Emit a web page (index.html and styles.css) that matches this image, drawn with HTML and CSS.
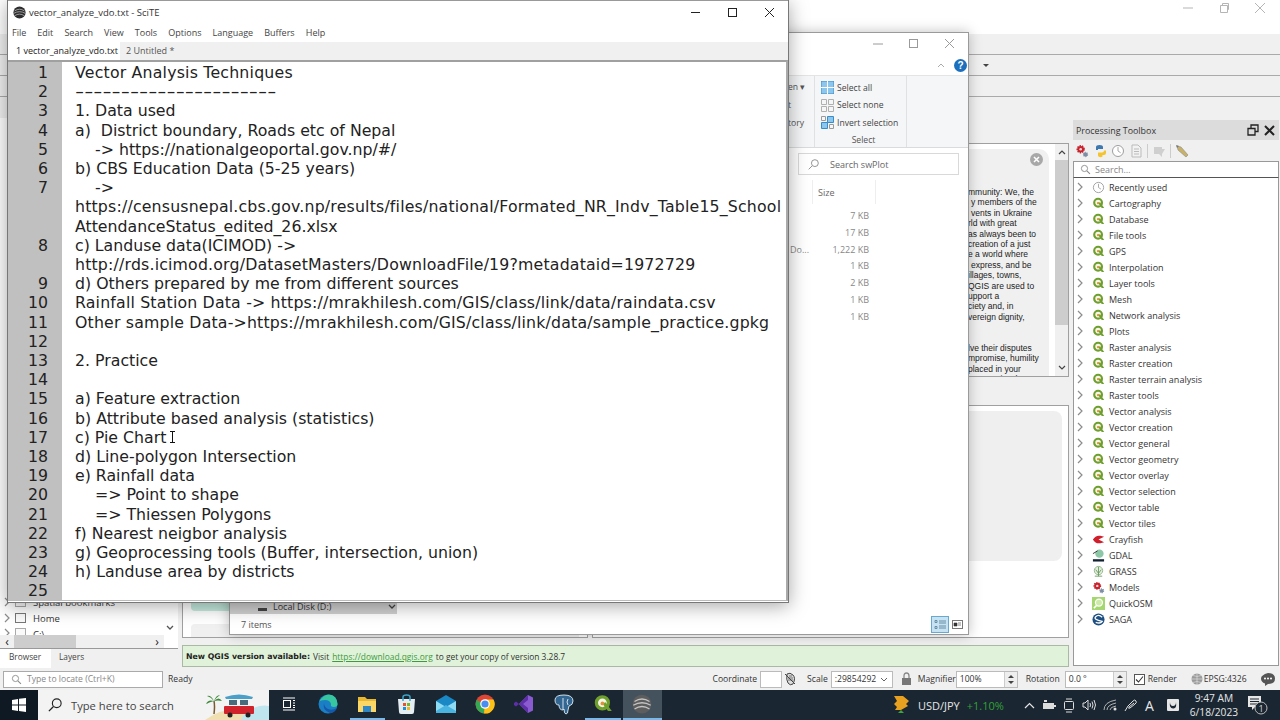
FILE: index.html
```html
<!DOCTYPE html>
<html lang="en">
<head>
    <meta charset="UTF-8">
    <title>vector_analyze_vdo.txt - SciTE</title>
    <link rel="stylesheet" href="styles.css">
</head>
<body>
    <!-- shared icons -->
    <svg class="defs" width="0" height="0">
        <symbol id="i-q" viewBox="0 0 16 16">
            <circle cx="7.5" cy="7" r="4.8" fill="#f4f7e8" stroke="#6f9f2c" stroke-width="2.6"/>
            <path d="M7.5 7.5 L12 13.5 L15 13.5 L10 6.5z" fill="#6f9f2c"/>
            <circle cx="7.5" cy="7.5" r="1.5" fill="#e0913a"/>
        </symbol>
        <symbol id="i-clock" viewBox="0 0 16 16">
            <circle cx="8" cy="8" r="6.3" fill="#fff" stroke="#9a9a9a" stroke-width="1.1"/>
            <path d="M8 3.5V8l3 2" fill="none" stroke="#9a9a9a" stroke-width="1"/>
        </symbol>
        <symbol id="i-search" viewBox="0 0 16 16">
            <circle cx="6.5" cy="6.5" r="4.5" fill="none" stroke="#8a8a8a" stroke-width="1.3"/>
            <path d="M10 10l4.500 4.500" stroke="#8a8a8a" stroke-width="1.500"/>
        </symbol>
        <symbol id="i-chev" viewBox="0 0 8 10">
            <path d="M2 1l4 4-4 4" fill="none" stroke="#8c8c8c" stroke-width="1.2"/>
        </symbol>
        <symbol id="i-gears" viewBox="0 0 16 16">
            <circle cx="6.500" cy="6" r="3.800" fill="#c8232c" stroke="#c8232c" stroke-width="2" stroke-dasharray="1.500 1.200"/>
            <circle cx="6.500" cy="6" r="1.500" fill="#f5d5d5"/>
            <circle cx="12" cy="12" r="2.300" fill="#7d8fa5" stroke="#7d8fa5" stroke-width="1.500" stroke-dasharray="1.200 1"/>
        </symbol>
        <symbol id="i-scite" viewBox="0 0 16 16">
            <circle cx="8" cy="8" r="7.500" fill="#2c2c2c"/>
            <path d="M2 6q6-4 12 0M1 9q7-4 14 0M2 12q6-4 12 0" fill="none" stroke="#b5b5b5" stroke-width="1"/>
        </symbol>
    </svg>

    <div class="desktop">

        <!-- QGIS main window, at the back -->
        <div class="qgis">
            <div class="q-title">
                <svg class="wc" width="12" height="12" viewBox="0 0 12 12"><path d="M1 6h10" stroke="#b5b5b5"/></svg>
                <svg class="wc" width="12" height="12" viewBox="0 0 12 12"><path d="M2.500 3.500h7v7h-7zM4.500 3.500v-2h6v6h-1" fill="none" stroke="#b5b5b5"/></svg>
                <svg class="wc" width="12" height="12" viewBox="0 0 12 12"><path d="M1 1l10 10M11 1L1 11" stroke="#b5b5b5"/></svg>
            </div>
            <div class="q-toolbar"></div>
            <div class="q-toolbar q-toolbar-menu"><span class="tool-drop"></span></div>
            <div class="q-toolbar"></div>
            <div class="q-toolbar q-toolbar-last"></div>

            <div class="q-body">
                <div class="q-left">
                    <div class="browser">
                        <div class="tree-row"><svg class="chev"><use href="#i-chev"/></svg><span class="tree-icon"></span>Spatial bookmarks</div>
                        <div class="tree-row"><svg class="chev"><use href="#i-chev"/></svg><span class="tree-icon tree-home"></span>Home</div>
                        <div class="tree-row tree-cut"><svg class="chev"><use href="#i-chev"/></svg><span class="tree-icon"></span>C:\</div>
                        <svg class="tree-down" width="8" height="6" viewBox="0 0 8 6"><path d="M1 1l3 3 3-3" fill="none" stroke="#555" stroke-width="1.300"/></svg>
                        <div class="h-scroll">
                            <span class="arrow">‹</span>
                            <span class="h-thumb"></span>
                            <span class="arrow">›</span>
                            <span class="h-end"></span>
                        </div>
                    </div>
                    <div class="dock-tabs">
                        <span class="dock-tab active">Browser</span>
                        <span class="dock-tab">Layers</span>
                    </div>
                </div>

                <div class="q-centre">
                    <div class="panes">
                        <div class="pane-left">
                            <div class="card-teal"></div>
                            <div class="card-grey"></div>
                        </div>
                        <div class="pane-right">
                            <div class="news">
                                <div class="news-card">
                                    <svg class="news-close" width="13" height="13" viewBox="0 0 13 13"><circle cx="6.500" cy="6.500" r="6.500" fill="#a8a8a8"/><path d="M4 4l5 5M9 4l-5 5" stroke="#fff" stroke-width="1.500"/></svg>
                                    <div class="news-line">mmunity: We, the</div>
                                    <div class="news-line in">y members of the</div>
                                    <div class="news-line in">vents in Ukraine</div>
                                    <div class="news-line">rld with great</div>
                                    <div class="news-line">as always been to</div>
                                    <div class="news-line">creation of a just</div>
                                    <div class="news-line">e a world where</div>
                                    <div class="news-line in">express, and be</div>
                                    <div class="news-line">illages, towns,</div>
                                    <div class="news-line">QGIS are used to</div>
                                    <div class="news-line">upport a</div>
                                    <div class="news-line">ciety and, in</div>
                                    <div class="news-line">vereign dignity,</div>
                                    <div class="news-line">&nbsp;</div>
                                    <div class="news-line">&nbsp;</div>
                                    <div class="news-line">lve their disputes</div>
                                    <div class="news-line">mpromise, humility</div>
                                    <div class="news-line">placed in your</div>
                                    <div class="news-line">community, the</div>
                                </div>
                                <div class="v-scroll">
                                    <svg width="8" height="6" viewBox="0 0 8 6"><path d="M1 5l3-3 3 3" fill="none" stroke="#444" stroke-width="1.200"/></svg>
                                    <span class="v-thumb"></span>
                                    <svg width="8" height="6" viewBox="0 0 8 6"><path d="M1 1l3 3 3-3" fill="none" stroke="#444" stroke-width="1.200"/></svg>
                                </div>
                            </div>
                            <div class="lower-box"><div class="lower-card"></div></div>
                        </div>
                    </div>
                    <div class="msgbar">
                        <b>New QGIS version available:</b> <span>Visit</span> <a href="#">https://download.qgis.org</a> <span>to get your copy of version 3.28.7</span>
                    </div>
                </div>

                <div class="toolbox">
                    <div class="tb-head">
                        <span>Processing Toolbox</span>
                        <svg class="tb-float" width="12" height="12" viewBox="0 0 12 12"><path d="M1 4.500h7v6.500H1zM4 4.500V1h7v6.500H8" fill="none" stroke="#222" stroke-width="1.300"/></svg>
                        <svg width="11" height="11" viewBox="0 0 11 11"><path d="M1 1l9 9M10 1l-9 9" stroke="#222" stroke-width="2"/></svg>
                    </div>
                    <div class="tb-tools">
                        <svg width="14" height="14"><use href="#i-gears"/></svg>
                        <svg width="14" height="14" viewBox="0 0 14 14"><path d="M3 6V3q0-2 3.500-2T10 3v2H5v1h6" fill="#3d78b0"/><path d="M11 6.500h2V9q0 2-2 2H9.500v1.500q-1 1-3 .5T5 11V8.500h4q2 0 2-2z" fill="#f4c430"/></svg>
                        <svg width="14" height="14"><use href="#i-clock"/></svg>
                        <svg width="14" height="14" viewBox="0 0 14 14"><path d="M3 1h6l3 3v9H3z" fill="#f2f2f2" stroke="#bbb"/><path d="M5 5h5M5 7.500h5M5 10h5" stroke="#bbb"/></svg>
                        <span class="tb-sep"></span>
                        <svg width="14" height="14" viewBox="0 0 14 14"><path d="M2 3h8v2h3l-3 5v3l-3-3H2z" fill="#cfcfcf"/></svg>
                        <span class="tb-sep"></span>
                        <svg width="14" height="14" viewBox="0 0 14 14"><path d="M2 2l4 1 7 8-2 2-8-7z" fill="#c8b26a" stroke="#8a8a8a" stroke-width=".6"/><path d="M1 1l3 1-2 2z" fill="#777"/></svg>
                    </div>
                    <div class="tb-search">
                        <svg width="11" height="11"><use href="#i-search"/></svg>
                        <span>Search…</span>
                    </div>
                    <div class="tb-list">
                        <div class="tb-row"><svg class="chev"><use href="#i-chev"/></svg><svg class="tb-ico"><use href="#i-clock"/></svg>Recently used</div>
                        <div class="tb-row"><svg class="chev"><use href="#i-chev"/></svg><svg class="tb-ico"><use href="#i-q"/></svg>Cartography</div>
                        <div class="tb-row"><svg class="chev"><use href="#i-chev"/></svg><svg class="tb-ico"><use href="#i-q"/></svg>Database</div>
                        <div class="tb-row"><svg class="chev"><use href="#i-chev"/></svg><svg class="tb-ico"><use href="#i-q"/></svg>File tools</div>
                        <div class="tb-row"><svg class="chev"><use href="#i-chev"/></svg><svg class="tb-ico"><use href="#i-q"/></svg>GPS</div>
                        <div class="tb-row"><svg class="chev"><use href="#i-chev"/></svg><svg class="tb-ico"><use href="#i-q"/></svg>Interpolation</div>
                        <div class="tb-row"><svg class="chev"><use href="#i-chev"/></svg><svg class="tb-ico"><use href="#i-q"/></svg>Layer tools</div>
                        <div class="tb-row"><svg class="chev"><use href="#i-chev"/></svg><svg class="tb-ico"><use href="#i-q"/></svg>Mesh</div>
                        <div class="tb-row"><svg class="chev"><use href="#i-chev"/></svg><svg class="tb-ico"><use href="#i-q"/></svg>Network analysis</div>
                        <div class="tb-row"><svg class="chev"><use href="#i-chev"/></svg><svg class="tb-ico"><use href="#i-q"/></svg>Plots</div>
                        <div class="tb-row"><svg class="chev"><use href="#i-chev"/></svg><svg class="tb-ico"><use href="#i-q"/></svg>Raster analysis</div>
                        <div class="tb-row"><svg class="chev"><use href="#i-chev"/></svg><svg class="tb-ico"><use href="#i-q"/></svg>Raster creation</div>
                        <div class="tb-row"><svg class="chev"><use href="#i-chev"/></svg><svg class="tb-ico"><use href="#i-q"/></svg>Raster terrain analysis</div>
                        <div class="tb-row"><svg class="chev"><use href="#i-chev"/></svg><svg class="tb-ico"><use href="#i-q"/></svg>Raster tools</div>
                        <div class="tb-row"><svg class="chev"><use href="#i-chev"/></svg><svg class="tb-ico"><use href="#i-q"/></svg>Vector analysis</div>
                        <div class="tb-row"><svg class="chev"><use href="#i-chev"/></svg><svg class="tb-ico"><use href="#i-q"/></svg>Vector creation</div>
                        <div class="tb-row"><svg class="chev"><use href="#i-chev"/></svg><svg class="tb-ico"><use href="#i-q"/></svg>Vector general</div>
                        <div class="tb-row"><svg class="chev"><use href="#i-chev"/></svg><svg class="tb-ico"><use href="#i-q"/></svg>Vector geometry</div>
                        <div class="tb-row"><svg class="chev"><use href="#i-chev"/></svg><svg class="tb-ico"><use href="#i-q"/></svg>Vector overlay</div>
                        <div class="tb-row"><svg class="chev"><use href="#i-chev"/></svg><svg class="tb-ico"><use href="#i-q"/></svg>Vector selection</div>
                        <div class="tb-row"><svg class="chev"><use href="#i-chev"/></svg><svg class="tb-ico"><use href="#i-q"/></svg>Vector table</div>
                        <div class="tb-row"><svg class="chev"><use href="#i-chev"/></svg><svg class="tb-ico"><use href="#i-q"/></svg>Vector tiles</div>
                        <div class="tb-row"><svg class="chev"><use href="#i-chev"/></svg><svg class="tb-ico" viewBox="0 0 14 14"><path d="M1 7q3-5 8-4l4 1-6 3 6 3-4 1q-5 1-8-4z" fill="#cf1f2b"/></svg>Crayfish</div>
                        <div class="tb-row"><svg class="chev"><use href="#i-chev"/></svg><svg class="tb-ico" viewBox="0 0 14 14"><circle cx="8" cy="5" r="4.500" fill="#8ec6a8"/><path d="M1 5l5-3" stroke="#333"/><path d="M1 11h12v2.500H1z" fill="#123"/></svg>GDAL</div>
                        <div class="tb-row"><svg class="chev"><use href="#i-chev"/></svg><svg class="tb-ico" viewBox="0 0 14 14"><circle cx="7" cy="6" r="4.500" fill="#e4f0dc" stroke="#8fb48a"/><path d="M7 2v10M4 5l3 4 3-4M3 12h8" fill="none" stroke="#6d9a68"/></svg>GRASS</div>
                        <div class="tb-row"><svg class="chev"><use href="#i-chev"/></svg><svg class="tb-ico"><use href="#i-gears"/></svg>Models</div>
                        <div class="tb-row"><svg class="chev"><use href="#i-chev"/></svg><svg class="tb-ico" viewBox="0 0 14 14"><rect width="14" height="14" fill="#a5d66f"/><circle cx="7.500" cy="6" r="3.800" fill="#cdeaa8" stroke="#fff" stroke-width="1.300"/><path d="M5 9l-3 3" stroke="#fff" stroke-width="1.600"/></svg>QuickOSM</div>
                        <div class="tb-row"><svg class="chev"><use href="#i-chev"/></svg><svg class="tb-ico" viewBox="0 0 14 14"><circle cx="7" cy="7" r="6.500" fill="#1e4f82"/><path d="M11 4.500Q7 1 4 4t7 5Q9 12 4 10" fill="none" stroke="#fff" stroke-width="1.400"/></svg>SAGA</div>
                    </div>
                </div>
            </div>

            <div class="statusbar">
                <div class="locator">
                    <svg width="11" height="11"><use href="#i-search"/></svg>
                    <span>Type to locate (Ctrl+K)</span>
                </div>
                <span class="st-ready">Ready</span>
                <span class="st-label st-coord">Coordinate</span>
                <span class="field f-coord"></span>
                <svg class="st-mouse" width="12" height="14" viewBox="0 0 12 14"><path d="M3 2q3-2 6 1t0 9q-3 2-5-1T3 2zM1 2l10 10" fill="#ddd" stroke="#444"/><path d="M5 4h3M4 6h5M4 8h5" stroke="#444" stroke-width=".7"/></svg>
                <span class="st-label st-scale">Scale</span>
                <span class="field f-scale">:29854292<svg width="8" height="5" viewBox="0 0 8 5"><path d="M1 1l3 3 3-3" fill="none" stroke="#666"/></svg></span>
                <svg class="st-lock" width="11" height="14" viewBox="0 0 11 14"><path d="M3 6V4q0-3 2.500-3T8 4v2" fill="none" stroke="#888" stroke-width="1.300"/><rect x="1" y="6" width="9" height="7" fill="#777"/></svg>
                <span class="st-label st-mag">Magnifier</span>
                <span class="field f-spin">100%<span class="spin"></span></span>
                <span class="st-label st-rot">Rotation</span>
                <span class="field f-spin f-rot">0.0 °<span class="spin"></span></span>
                <span class="check"><svg width="9" height="9" viewBox="0 0 9 9"><path d="M1 4.500l2.500 2.500L8 1.500" fill="none" stroke="#333" stroke-width="1.100"/></svg></span>
                <span class="st-label st-render">Render</span>
                <svg class="st-globe" width="12" height="12" viewBox="0 0 12 12"><circle cx="6" cy="6" r="5.500" fill="#9a9a9a"/><path d="M0 6h12M6 0v12M2 2.500q4 2 8 0M2 9.500q4-2 8 0" stroke="#ddd" stroke-width=".7" fill="none"/></svg>
                <span class="st-label st-epsg">EPSG:4326</span>
                <svg class="st-bubble" width="14" height="13" viewBox="0 0 14 13"><path d="M7 0q7 0 7 5.500T7 11L4 13v-2.500Q0 9 0 5.500T7 0z" fill="#555"/><circle cx="4" cy="5.500" r="1" fill="#fff"/><circle cx="7" cy="5.500" r="1" fill="#fff"/><circle cx="10" cy="5.500" r="1" fill="#fff"/></svg>
            </div>
        </div>

        <!-- File Explorer, mostly covered -->
        <div class="explorer">
            <div class="ex-title">
                <svg class="wc" width="12" height="12" viewBox="0 0 12 12"><path d="M1 6h10" stroke="#9a9a9a"/></svg>
                <svg class="wc" width="12" height="12" viewBox="0 0 12 12"><rect x="1.500" y="1.500" width="8" height="8" fill="none" stroke="#9a9a9a"/></svg>
                <svg class="wc" width="12" height="12" viewBox="0 0 12 12"><path d="M1 1l9 9M10 1l-9 9" stroke="#9a9a9a"/></svg>
            </div>
            <div class="ex-help">
                <svg width="8" height="5" viewBox="0 0 8 5"><path d="M1 4l3-3 3 3" fill="none" stroke="#aaa"/></svg>
                <span class="help-dot">?</span>
            </div>
            <div class="ribbon">
                <div class="rb-open">
                    <span>en ▾</span>
                    <span>t</span>
                    <span>tory</span>
                </div>
                <div class="rb-select">
                    <div class="rb-item">
                        <svg width="13" height="13" viewBox="0 0 13 13"><rect width="13" height="13" fill="#8cc6ec" stroke="#3a8cc8"/><path d="M6.500 0v13M0 6.500h13" stroke="#fff"/></svg>
                        Select all
                    </div>
                    <div class="rb-item">
                        <svg width="13" height="13" viewBox="0 0 13 13"><path d="M.5.500h5v5h-5zM7.500.500h5v5h-5zM.5 7.500h5v5h-5zM7.500 7.500h5v5h-5z" fill="none" stroke="#b0b0b0"/></svg>
                        Select none
                    </div>
                    <div class="rb-item">
                        <svg width="13" height="13" viewBox="0 0 13 13"><path d="M6.500.500h6v6h-6zM.5 6.500h6v6h-6z" fill="#8cc6ec" stroke="#3a8cc8"/><path d="M.5.500h4v4h-4zM8.500 8.500h4v4h-4z" fill="none" stroke="#9a9a9a"/></svg>
                        Invert selection
                    </div>
                    <div class="rb-label">Select</div>
                </div>
            </div>
            <div class="ex-search-row">
                <div class="ex-search">
                    <svg width="11" height="11" viewBox="0 0 16 16"><circle cx="10" cy="6" r="5" fill="none" stroke="#888" stroke-width="1.300"/><path d="M6 10l-5 5" stroke="#888" stroke-width="1.300"/></svg>
                    <span>Search swPlot</span>
                </div>
            </div>
            <div class="ex-body">
                <div class="ex-nav">
                    <div class="nav-row">
                        <span class="disk"></span>
                        <span>Local Disk (D:)</span>
                        <svg width="8" height="6" viewBox="0 0 8 6"><path d="M1 1l3 3 3-3" fill="none" stroke="#444" stroke-width="1.300"/></svg>
                    </div>
                </div>
                <div class="ex-list">
                    <div class="size-head">Size</div>
                    <div class="size-row">7 KB</div>
                    <div class="size-row">17 KB</div>
                    <div class="size-row"><span class="clip-name">Do...</span>1,222 KB</div>
                    <div class="size-row">1 KB</div>
                    <div class="size-row">2 KB</div>
                    <div class="size-row">1 KB</div>
                    <div class="size-row">1 KB</div>
                </div>
            </div>
            <div class="ex-status">
                <span>7 items</span>
                <span class="view-btn active">
                    <svg width="13" height="13" viewBox="0 0 13 13"><path d="M1 2.500h2v2H1zM1 8.500h2v2H1zM5 3h7M5 5h7M5 8h7M5 10h7" fill="none" stroke="#6a8ea5"/></svg>
                </span>
                <span class="view-btn">
                    <svg width="11" height="9" viewBox="0 0 11 9"><rect x=".5" y=".5" width="10" height="8" fill="#fff" stroke="#777"/><path d="M2 3h3v3H2zM6 3h3M6 5h3" fill="#333" stroke="#333" stroke-width=".6"/></svg>
                </span>
            </div>
        </div>

        <!-- SciTE editor, in front -->
        <div class="scite">
            <div class="sc-title">
                <svg class="sc-icon"><use href="#i-scite"/></svg>
                <span class="sc-name">vector_analyze_vdo.txt - SciTE</span>
                <svg class="wc" width="11" height="11" viewBox="0 0 11 11"><path d="M1 5.500h9" stroke="#222"/></svg>
                <svg class="wc" width="11" height="11" viewBox="0 0 11 11"><rect x="1.500" y="1.500" width="8" height="8" fill="none" stroke="#222"/></svg>
                <svg class="wc" width="11" height="11" viewBox="0 0 11 11"><path d="M1 1l9 9M10 1l-9 9" stroke="#222"/></svg>
            </div>
            <div class="sc-menu">
                <span>File</span><span>Edit</span><span>Search</span><span>View</span><span>Tools</span><span>Options</span><span>Language</span><span>Buffers</span><span>Help</span>
            </div>
            <div class="sc-tabs">
                <span class="sc-tab active">1 vector_analyze_vdo.txt</span>
                <span class="sc-tab">2 Untitled *</span>
            </div>
            <div class="editor">
                <div class="line"><span class="num">1</span><span class="txt wide">Vector Analysis Techniques</span></div>
                <div class="line"><span class="num">2</span><span class="txt"><span class="dash">----------------------</span></span></div>
                <div class="line"><span class="num">3</span><span class="txt">1. Data used</span></div>
                <div class="line"><span class="num">4</span><span class="txt">a)  District boundary, Roads etc of Nepal</span></div>
                <div class="line"><span class="num">5</span><span class="txt">    -&gt; https://nationalgeoportal.gov.np/#/</span></div>
                <div class="line"><span class="num">6</span><span class="txt">b) CBS Education Data (5-25 years)</span></div>
                <div class="line"><span class="num">7</span><span class="txt">    -&gt;<br><span class="url">https://censusnepal.cbs.gov.np/results/files/national/Formated_NR_Indv_Table15_School</span><br>AttendanceStatus_edited_26.xlsx</span></div>
                <div class="line"><span class="num">8</span><span class="txt">c) Landuse data(ICIMOD) -&gt;<br><span class="url">http://rds.icimod.org/DatasetMasters/DownloadFile/19?metadataid=1972729</span></span></div>
                <div class="line"><span class="num">9</span><span class="txt">d) Others prepared by me from different sources</span></div>
                <div class="line"><span class="num">10</span><span class="txt url">Rainfall Station Data -&gt; https://mrakhilesh.com/GIS/class/link/data/raindata.csv</span></div>
                <div class="line"><span class="num">11</span><span class="txt url">Other sample Data-&gt;https://mrakhilesh.com/GIS/class/link/data/sample_practice.gpkg</span></div>
                <div class="line"><span class="num">12</span><span class="txt"></span></div>
                <div class="line"><span class="num">13</span><span class="txt">2. Practice</span></div>
                <div class="line"><span class="num">14</span><span class="txt"></span></div>
                <div class="line"><span class="num">15</span><span class="txt">a) Feature extraction</span></div>
                <div class="line"><span class="num">16</span><span class="txt">b) Attribute based analysis (statistics)</span></div>
                <div class="line"><span class="num">17</span><span class="txt">c) Pie Chart</span></div>
                <div class="line"><span class="num">18</span><span class="txt">d) Line-polygon Intersection</span></div>
                <div class="line"><span class="num">19</span><span class="txt">e) Rainfall data</span></div>
                <div class="line"><span class="num">20</span><span class="txt">    =&gt; Point to shape</span></div>
                <div class="line"><span class="num">21</span><span class="txt">    =&gt; Thiessen Polygons</span></div>
                <div class="line"><span class="num">22</span><span class="txt">f) Nearest neigbor analysis</span></div>
                <div class="line"><span class="num">23</span><span class="txt">g) Geoprocessing tools (Buffer, intersection, union)</span></div>
                <div class="line"><span class="num">24</span><span class="txt">h) Landuse area by districts</span></div>
                <div class="line"><span class="num">25</span><span class="txt"></span></div>
            </div>
            <svg class="ibeam" width="7" height="12" viewBox="0 0 7 12"><path d="M1 .5h5M1 11.500h5M3.500 1v10" fill="none" stroke="#111"/></svg>
        </div>

        <!-- Windows taskbar -->
        <div class="taskbar">
            <div class="start">
                <svg width="14" height="14" viewBox="0 0 14 14"><path d="M0 2l6-1v5.500H0zM7 .8L14 0v6.500H7zM0 7.500h6V13l-6-1zM7 7.500h7V14l-7-1z" fill="#fff"/></svg>
            </div>
            <div class="tb-searchbox">
                <svg width="14" height="14" viewBox="0 0 16 16"><circle cx="10" cy="6" r="5" fill="none" stroke="#222" stroke-width="1.300"/><path d="M6 10l-5 5" stroke="#222" stroke-width="1.500"/></svg>
                <span>Type here to search</span>
                <svg class="beach" width="64" height="30" viewBox="0 0 64 30">
                    <path d="M0 30Q20 16 42 20T64 24V30z" fill="#f0dfb0"/>
                    <path d="M40 22q14-8 24-6v14H36z" fill="#bfe6ef"/>
                    <path d="M9 24q1-8 0-13" stroke="#7a5a2e" stroke-width="1.500" fill="none"/>
                    <path d="M9 11q-6-2-8 3 4-2 8-3zm0 0q5-5 8 0-4-1-8 0zm0 0q-3-6-7-5 4 1 7 5zm0 0q2-6 6-6-3 2-6 6z" fill="#3d8a3a"/>
                    <path d="M20 7q14-5 28 0l-1 2H21z" fill="#4aa0c8"/>
                    <rect x="21" y="9" width="26" height="8" fill="#f4f4f4"/>
                    <rect x="19" y="16" width="30" height="8" rx="1" fill="#d0232b"/>
                    <rect x="24" y="10" width="8" height="5" fill="#4a6b7c"/><rect x="35" y="10" width="8" height="5" fill="#4a6b7c"/>
                    <circle cx="25" cy="25" r="2.500" fill="#222"/><circle cx="43" cy="25" r="2.500" fill="#222"/>
                </svg>
            </div>
            <div class="tasks">
                <span class="task">
                    <svg width="14" height="14" viewBox="0 0 14 14"><path d="M1 1h12M1 13h12" stroke="#fff" stroke-width="1.200"/><rect x="1.500" y="3.500" width="7" height="7" fill="none" stroke="#fff"/><path d="M11 3.500h2M11 6h2M11 8.500h2M11 10.500h2" stroke="#fff"/></svg>
                </span>
                <span class="task">
                    <svg width="20" height="20" viewBox="0 0 20 20"><circle cx="10" cy="10" r="9.500" fill="#1a7fc4"/><path d="M1 8Q5 .5 11 .5q8 .5 8.500 9.500 0 3-3.500 3-4 0-3-3-1-4-6-4T1 8z" fill="#37c6a0"/><path d="M6 9q-2 7 6 10 5 0 7-5-5 3-9 1T6 9z" fill="#1557a8"/></svg>
                </span>
                <span class="task open">
                    <svg width="20" height="18" viewBox="0 0 20 18"><path d="M1 2h7l2 2h9v13H1z" fill="#e8b830"/><path d="M1 6h18v11H1z" fill="#fad667"/><rect x="6" y="11" width="8" height="6" fill="#2d87c7"/></svg>
                </span>
                <span class="task">
                    <svg width="19" height="20" viewBox="0 0 19 20"><path d="M1 5h17l-1 13q0 2-2 2H4q-2 0-2-2z" fill="#e4eef2"/><path d="M6 7V3q0-2 3.500-2T13 3v4" fill="none" stroke="#3da5c8" stroke-width="1.500"/><rect x="6" y="9" width="3" height="3" fill="#e8542a"/><rect x="10" y="9" width="3" height="3" fill="#7ab52a"/><rect x="6" y="13" width="3" height="3" fill="#1e90d8"/><rect x="10" y="13" width="3" height="3" fill="#f4b81c"/></svg>
                </span>
                <span class="task">
                    <svg width="20" height="18" viewBox="0 0 20 18"><path d="M0 6l10-6 10 6v12H0z" fill="#1a88c4"/><path d="M0 6l10 6 10-6v10H0z" fill="#8fdcf2"/><path d="M0 16l10-6 10 6v2H0z" fill="#4ab4e0"/></svg>
                </span>
                <span class="task">
                    <svg width="20" height="20" viewBox="0 0 20 20"><circle cx="10" cy="10" r="9.500" fill="#dd4536"/><path d="M10 10L1.500 6A9.500 9.500 0 0 0 9 19.500z" fill="#34a853"/><path d="M10 5.500h8.500A9.500 9.500 0 0 1 9 19.500z" fill="#fbc116"/><circle cx="10" cy="10" r="4.800" fill="#fff"/><circle cx="10" cy="10" r="3.600" fill="#4a8df0"/></svg>
                </span>
                <span class="task">
                    <svg width="20" height="20" viewBox="0 0 20 20"><path d="M14 1l5 2.500v13L14 19 5 10z" fill="#8a5bd0"/><path d="M14 1L5 10 2 7.500 0 9v2l2 1.500 3-2.500 9 9v-5L9 10l5-4z" fill="#5d2fa8"/></svg>
                </span>
                <span class="task">
                    <svg width="20" height="21" viewBox="0 0 20 21"><path d="M10 1q9 0 9 6 0 4-4 5l-1 4q0 4-2 4t-2-5l-1 1q-4 0-4-5Q1 11 1 6q0-5 9-5z" fill="#336791" stroke="#cfe0ec"/><path d="M9 4v12M14 5q-2 3 0 6" fill="none" stroke="#cfe0ec"/></svg>
                </span>
                <span class="task open">
                    <svg width="20" height="20"><use href="#i-q"/></svg>
                </span>
                <span class="task current">
                    <svg width="20" height="20" viewBox="0 0 16 16"><circle cx="8" cy="8" r="7.500" fill="#5d5d5d"/><path d="M2 6q6-4 12 0M1 9q7-4 14 0M2 12q6-4 12 0" fill="none" stroke="#c4c4c4"/></svg>
                </span>
            </div>
            <div class="tray">
                <svg class="tr-ticker" width="18" height="20" viewBox="0 0 18 20"><path d="M2 1h9l6 5-3 3 2 2-7 4H3l2-3-3-3 3-3z" fill="#e8a020"/><path d="M9 15l3 3H6z" fill="#3fa43f"/></svg>
                <span class="tr-pair">USD/JPY</span>
                <span class="tr-pct">+1.10%</span>
                <svg class="tr-up" width="11" height="7" viewBox="0 0 11 7"><path d="M1 6l4.500-4.500L10 6" fill="none" stroke="#e6e6e6" stroke-width="1.200"/></svg>
                <svg class="tr-ico" width="14" height="12" viewBox="0 0 14 12"><path d="M1 4h11v6H1z" fill="#ddd"/><path d="M2 1h3v2H2zM12 6h2v2h-2z" fill="#ddd"/></svg>
                <svg class="tr-ico" width="12" height="15" viewBox="0 0 12 15"><rect x="1.500" y="3.500" width="9" height="8" rx="1" fill="none" stroke="#ddd"/><path d="M3 1h6M3 14h6" stroke="#ddd"/></svg>
                <svg class="tr-ico" width="14" height="12" viewBox="0 0 14 12"><path d="M1 4h2l3-3v10L3 8H1z" fill="none" stroke="#ddd"/><path d="M8 4q1 2 0 4M10 2.500q2 3.500 0 7M12 1q3 5 0 10" fill="none" stroke="#ddd"/></svg>
                <svg class="tr-ico" width="14" height="12" viewBox="0 0 14 12"><path d="M1 11q0-8 12-10M4 11q0-5 9-7M7 11q0-3 6-4" fill="none" stroke="#b0b0b0"/><circle cx="12" cy="10" r="1.500" fill="#ddd"/></svg>
                <svg class="tr-ico" width="14" height="14" viewBox="0 0 14 14"><path d="M1 13l3-5 5-5q2-2 3 0t-1 3l-5 4q-2 1-1-1l5-4" fill="none" stroke="#ddd"/></svg>
                <span class="tr-a">A</span>
                <svg class="tr-ico tr-shield" width="12" height="12" viewBox="0 0 12 12"><rect width="12" height="12" rx="1" fill="#e6e6e6"/><path d="M3 3q-1 6 3 6.500T9 3q0 4-3 4T3 3z" fill="#1b2733"/></svg>
                <div class="tr-clock"><span>9:47 AM</span><span>6/18/2023</span></div>
                <svg class="tr-note" width="21" height="20" viewBox="0 0 21 20"><path d="M1 1h13v11H8l-3 3v-3H1z" fill="#e6e6e6"/><path d="M3 4h9M3 6.500h9M3 9h7" stroke="#1b2733"/><circle cx="14" cy="13" r="6" fill="#1b2733" stroke="#bbb"/><text x="14" y="16.500" class="note-num">1</text></svg>
            </div>
        </div>
    </div>
</body>
</html>
```

FILE: styles.css
```css
* {
    box-sizing: border-box;
}
body {
    margin: 0;
    background-color: #fff;
    font-family: "Open Sans", "Noto Sans", sans-serif;
    font-size: 9px;
    color: #333;
}
.defs {
    display: block;
}
svg {
    flex: none;
}
.desktop {
    position: relative;
    width: 1280px;
    height: 720px;
    overflow: hidden;
}

/* QGIS */
.qgis {
    position: absolute;
    top: 0;
    left: 0;
    width: 1280px;
    height: 690px;
    display: flex;
    flex-direction: column;
    background-color: #f0f0f0;
}
.q-title {
    height: 34px;
    background-color: #fff;
    display: flex;
    justify-content: flex-end;
    align-items: flex-start;
    gap: 24px;
    padding: 2px 14px 0 0;
}
.q-toolbar {
    height: 21px;
    border-bottom: 1px solid #aaa;
    display: flex;
    align-items: center;
}
.q-toolbar-menu {
    padding-left: 983px;
}
.q-toolbar-last {
    border-bottom: none;
}
.tool-drop {
    width: 0;
    height: 0;
    border-left: 3px solid transparent;
    border-right: 3px solid transparent;
    border-top: 3px solid #444;
}
.q-body {
    height: 550px;
    display: flex;
}
.q-left {
    width: 182px;
    display: flex;
    flex-direction: column;
    padding-right: 4px;
}
.browser {
    flex: 1;
    background-color: #fff;
    border-bottom: 1px solid #999;
    display: flex;
    flex-direction: column;
    justify-content: flex-end;
    position: relative;
    overflow: hidden;
}
.tree-row {
    height: 16px;
    display: flex;
    align-items: center;
    gap: 4px;
    padding-left: 3px;
    font-size: 9.5px;
    flex: none;
}
.tree-cut {
    height: 9px;
    align-items: flex-start;
    overflow: hidden;
    padding-top: 2px;
}
.chev {
    width: 8px;
    height: 10px;
}
.tree-icon {
    width: 11px;
    height: 10px;
    border: 1px solid #aaa;
    background-color: #fafafa;
    margin-right: 3px;
}
.tree-home {
    border-color: #777;
}
.tree-down {
    position: absolute;
    right: 4px;
    bottom: 17px;
}
.h-scroll {
    height: 13px;
    flex: none;
    background-color: #f0f0f0;
    display: flex;
    align-items: center;
    font-size: 12px;
    line-height: 12px;
    color: #222;
}
.arrow {
    width: 14px;
    text-align: center;
}
.h-thumb {
    width: 62px;
    height: 13px;
    background-color: #cdcdcd;
}
.arrow + .h-thumb + .arrow {
    margin-left: 74px;
}
.h-end {
    flex: 1;
    height: 13px;
    background-color: #fff;
}
.dock-tabs {
    height: 19px;
    display: flex;
    align-items: stretch;
}
.dock-tab {
    padding: 2px 8px 0;
    font-size: 8.3px;
    color: #444;
}
.dock-tab.active {
    width: 51px;
    padding-left: 9px;
    background-color: #fff;
}
.q-centre {
    width: 887px;
    display: flex;
    flex-direction: column;
}
.panes {
    height: 520px;
    display: flex;
    gap: 4px;
}
.pane-left {
    width: 406px;
    background-color: #fff;
    border: 1px solid #a0a0a0;
    display: flex;
    flex-direction: column;
    justify-content: flex-end;
    gap: 13px;
    padding: 0 8px 0;
}
.card-teal {
    height: 12px;
    background-color: #c5ebdf;
    border-radius: 0 0 4px 4px;
}
.card-grey {
    height: 13px;
    background-color: #f0f0f0;
    border-radius: 4px 4px 0 0;
}
.pane-right {
    flex: 1;
    padding-top: 25px;
    display: flex;
    flex-direction: column;
}
.news {
    height: 234px;
    flex: none;
    border: 1px solid #a0a0a0;
    background-color: #fff;
    display: flex;
    padding-top: 5px;
}
.news-card {
    position: relative;
    flex: 1;
    background-color: #f0f0f0;
    border-radius: 0 10px 0 0;
    margin-right: 6px;
    padding: 38px 0 0 375px;
    overflow: hidden;
    font-family: "Liberation Sans", sans-serif;
    font-size: 8.5px;
    color: #222;
}
.news-close {
    position: absolute;
    top: 4px;
    right: 6px;
}
.news-line {
    height: 10.4px;
    line-height: 10.4px;
    white-space: nowrap;
}
.news-line.in {
    padding-left: 3px;
}
.v-scroll {
    width: 13px;
    margin-top: -5px;
    background-color: #f0f0f0;
    display: flex;
    flex-direction: column;
    align-items: center;
    justify-content: space-between;
    padding: 5px 0;
}
.v-thumb {
    width: 13px;
    height: 165px;
    margin-bottom: 35px;
    background-color: #cdcdcd;
}
.lower-box {
    flex: 1;
    margin-top: 28px;
    background-color: #fff;
    border: 1px solid #a0a0a0;
    padding: 5px 6px;
}
.lower-card {
    height: 150px;
    background-color: #efefef;
    border-radius: 8px;
}
.msgbar {
    height: 22px;
    margin-top: 7px;
    background-color: #e0f2d9;
    border: 1px solid #a9b9a3;
    display: flex;
    align-items: center;
    gap: 3px;
    padding-left: 3px;
    font-size: 8.4px;
    color: #333;
    white-space: pre;
}
.msgbar b {
    font-family: "DejaVu Sans", sans-serif;
    font-size: 7.800px;
    color: #222;
}
.msgbar a {
    color: #3f9a3f;
}
.toolbox {
    width: 209px;
    margin-top: 2px;
    margin-left: 2px;
    padding: 0 1px 2px 2px;
    display: flex;
    flex-direction: column;
}
.tb-head {
    height: 20px;
    flex: none;
    background-color: #dcdcdc;
    display: flex;
    align-items: center;
    padding: 0 4px 0 3px;
    font-size: 8.9px;
    color: #333;
}
.tb-head span {
    flex: 1;
}
.tb-float {
    margin-right: 5px;
}
.tb-tools {
    height: 21px;
    flex: none;
    display: flex;
    align-items: center;
    gap: 4px;
    padding-left: 2px;
}
.tb-sep {
    width: 1px;
    height: 14px;
    background-color: #ccc;
}
.tb-search {
    height: 17px;
    flex: none;
    background-color: #fff;
    border: 1px solid #999;
    border-bottom-color: #555;
    display: flex;
    align-items: center;
    gap: 4px;
    padding-left: 6px;
    color: #888;
    font-size: 9px;
}
.tb-list {
    flex: 1;
    background-color: #fff;
    border: 1px solid #999;
    border-top: none;
    padding-top: 1px;
}
.tb-row {
    height: 16px;
    display: flex;
    align-items: center;
    padding-left: 2px;
    font-size: 9px;
    color: #333;
    white-space: nowrap;
}
.tb-ico {
    width: 13px;
    height: 13px;
    margin: 0 4px 0 8px;
}

/* status bar */
.statusbar {
    height: 22px;
    flex: none;
    display: flex;
    align-items: center;
    font-size: 8.6px;
    padding-left: 3px;
    position: relative;
}
.statusbar > * {
    flex: none;
}
.locator {
    width: 160px;
    height: 17px;
    background-color: #fff;
    border: 1px solid #aaa;
    display: flex;
    align-items: center;
    gap: 5px;
    padding-left: 7px;
    color: #888;
}
.st-ready {
    margin-left: 5px;
}
.st-coord {
    margin-left: 520px;
}
.field {
    height: 17px;
    background-color: #fff;
    border: 1px solid #bbb;
    display: flex;
    align-items: center;
    padding-left: 3px;
}
.f-coord {
    width: 22px;
    margin-left: 3px;
}
.st-mouse {
    margin-left: 2px;
}
.st-scale {
    margin-left: 11px;
}
.f-scale {
    width: 62px;
    margin-left: 3px;
    justify-content: space-between;
    padding-right: 4px;
}
.st-lock {
    margin-left: 8px;
}
.st-mag {
    margin-left: 6px;
}
.f-spin {
    width: 62px;
    margin-left: 0;
    position: relative;
}
.f-rot {
    margin-left: 5px;
}
.spin {
    position: absolute;
    top: 0;
    right: 0;
    width: 13px;
    height: 15px;
    background-color: #eee;
    border-left: 1px solid #ccc;
}
.spin::before {
    content: "";
    position: absolute;
    top: 3px;
    left: 3px;
    border-left: 3px solid transparent;
    border-right: 3px solid transparent;
    border-bottom: 3px solid #444;
}
.spin::after {
    content: "";
    position: absolute;
    bottom: 3px;
    left: 3px;
    border-left: 3px solid transparent;
    border-right: 3px solid transparent;
    border-top: 3px solid #444;
}
.st-rot {
    margin-left: 8px;
}
.check {
    width: 11px;
    height: 11px;
    margin-left: 7px;
    background-color: #fff;
    border: 1px solid #555;
    display: flex;
    align-items: center;
    justify-content: center;
}
.st-render {
    margin-left: 3px;
}
.st-globe {
    margin-left: 14px;
}
.st-epsg {
    margin-left: 1px;
}
.st-bubble {
    margin-left: 14px;
}

/* Explorer */
.explorer {
    position: absolute;
    top: 32px;
    left: 229px;
    width: 740px;
    height: 603px;
    background-color: #fff;
    border: 1px solid #9a9a9a;
    box-shadow: 0 0 12px rgba(0, 0, 0, 0.25);
    display: flex;
    flex-direction: column;
}
.ex-title {
    height: 22px;
    flex: none;
    display: flex;
    justify-content: flex-end;
    align-items: center;
    gap: 24px;
    padding-right: 12px;
}
.ex-help {
    height: 20px;
    flex: none;
    display: flex;
    justify-content: flex-end;
    align-items: center;
    gap: 9px;
    padding-right: 1px;
}
.help-dot {
    width: 13px;
    height: 13px;
    border-radius: 50%;
    background-color: #1c6fbd;
    color: #fff;
    font-family: "Liberation Sans", sans-serif;
    font-size: 10px;
    font-weight: bold;
    text-align: center;
    line-height: 13px;
}
.ribbon {
    height: 73px;
    flex: none;
    background-color: #f5f6f7;
    border-top: 1px solid #e4e4e4;
    border-bottom: 1px solid #dadbdc;
    display: flex;
    padding-left: 558px;
    font-size: 8.6px;
    color: #444;
}
.rb-open {
    width: 27px;
    border-right: 1px solid #e0e1e2;
    display: flex;
    flex-direction: column;
    gap: 6px;
    padding-top: 5px;
    line-height: 12px;
    color: #555;
    white-space: nowrap;
}
.rb-select {
    width: 92px;
    border-right: 1px solid #e0e1e2;
    padding: 3px 0 0 6px;
}
.rb-item {
    height: 17.500px;
    display: flex;
    align-items: center;
    gap: 3px;
    white-space: nowrap;
}
.rb-label {
    margin-top: 2px;
    text-align: center;
    color: #555;
}
.ex-search-row {
    height: 32px;
    flex: none;
    padding: 5px 9px 5px 568px;
}
.ex-search {
    height: 22px;
    background-color: #fff;
    border: 1px solid #d9d9d9;
    display: flex;
    align-items: center;
    gap: 11px;
    padding-left: 9px;
    color: #666;
    font-size: 9px;
}
.ex-body {
    height: 434px;
    flex: none;
    display: flex;
}
.ex-nav {
    width: 167px;
    display: flex;
    flex-direction: column;
    justify-content: flex-end;
}
.nav-row {
    height: 15px;
    background-color: #d0d0d0;
    display: flex;
    align-items: center;
    padding-left: 28px;
    gap: 4px;
    color: #333;
}
.nav-row span:nth-child(2) {
    flex: 1;
}
.nav-row svg {
    margin-right: 1px;
}
.disk {
    width: 9px;
    height: 3px;
    margin-top: 6px;
    margin-right: 2px;
    background-color: #444;
}
.ex-list {
    flex: 1;
    padding-left: 415px;
    color: #888;
    position: relative;
}
.size-head {
    width: 64px;
    height: 24px;
    border-left: 1px solid #eee;
    border-right: 1px solid #eee;
    padding: 6px 0 0 5px;
    color: #666;
    margin-bottom: 4px;
}
.size-row {
    width: 57px;
    height: 16.800px;
    line-height: 16.800px;
    text-align: right;
    position: relative;
}
.clip-name {
    position: absolute;
    left: -22px;
}
.ex-status {
    flex: 1;
    display: flex;
    align-items: center;
    padding: 0 4px 0 11px;
    gap: 1px;
    color: #555;
}
.ex-status span:first-child {
    flex: 1;
}
.view-btn {
    width: 14px;
    height: 17px;
    display: flex;
    align-items: center;
    justify-content: center;
}
.view-btn.active {
    width: 18px;
    background-color: #c5e3f2;
    border: 1px solid #69a8cf;
}

/* SciTE */
.scite {
    position: absolute;
    top: 0;
    left: 7px;
    width: 782px;
    height: 603px;
    background-color: #fff;
    border: 1px solid #777;
    border-top: none;
    box-shadow: 0 3px 18px rgba(0, 0, 0, 0.35);
    display: flex;
    flex-direction: column;
}
.sc-title {
    height: 22px;
    flex: none;
    display: flex;
    align-items: center;
    padding: 1px 0 0 5px;
    border-top: 1px solid #999;
    font-size: 9.500px;
    color: #333;
}
.sc-icon {
    width: 13px;
    height: 13px;
    margin-right: 3px;
}
.sc-name {
    flex: 1;
}
.sc-title .wc {
    margin-right: 26px;
}
.sc-title .wc:last-child {
    margin-right: 13px;
}
.sc-menu {
    height: 20px;
    flex: none;
    display: flex;
    align-items: center;
    gap: 11.100px;
    padding-left: 4px;
    font-size: 9px;
    color: #444;
}
.sc-tabs {
    height: 18px;
    flex: none;
    background-color: #f0f0f0;
    display: flex;
    align-items: flex-end;
    font-size: 9px;
    color: #555;
}
.sc-tab {
    height: 18px;
    padding: 2px 5px 0 6px;
    white-space: nowrap;
}
.sc-tab.active {
    background-color: #fff;
    width: 112px;
    padding-left: 8px;
    font-size: 9px;
    color: #222;
}
.editor {
    height: 541px;
    flex: none;
    padding-top: 1px;
    border-top: 2px solid #a0a0a0;
    border-right: 2px solid #aaa;
    border-bottom: 1px solid #bbb;
    background: linear-gradient(to right, #c0c0c0 54px, #fff 54px);
    font-family: "DejaVu Sans", sans-serif;
    font-size: 15.750px;
    line-height: 19.200px;
    color: #222;
    overflow: hidden;
}
.line {
    display: flex;
}
.num {
    width: 40px;
    flex: none;
    text-align: right;
}
.txt {
    padding-left: 27px;
    white-space: pre;
}
.wide {
    letter-spacing: 0.2px;
}
.url {
    letter-spacing: 0.18px;
}
.dash {
    display: inline-block;
    transform: scaleX(1.61);
    transform-origin: left center;
}
.ibeam {
    position: absolute;
    left: 161px;
    top: 431px;
}

/* taskbar */
.taskbar {
    position: absolute;
    top: 690px;
    left: 0;
    width: 1280px;
    height: 30px;
    background-color: #1a2733;
    display: flex;
    align-items: center;
    color: #e6e6e6;
}
.start {
    width: 38px;
    height: 30px;
    background-color: #0f1923;
    display: flex;
    align-items: center;
    justify-content: center;
}
.tb-searchbox {
    width: 231px;
    height: 30px;
    background-color: #f3f3f3;
    display: flex;
    align-items: center;
    gap: 9px;
    padding-left: 10px;
    font-size: 11.200px;
    color: #444;
    position: relative;
}
.tb-searchbox .beach {
    position: absolute;
    right: 0;
    top: 0;
}
.tasks {
    display: flex;
    height: 30px;
}
.task {
    width: 39.300px;
    height: 30px;
    display: flex;
    align-items: center;
    justify-content: center;
    border-bottom: 2px solid transparent;
}
.task.open {
    border-image: linear-gradient(to right, transparent 3px, #76b9ed 3px, #76b9ed 36px, transparent 36px) 1;
}
.task.current {
    background-color: #44525e;
    border-bottom-color: #76b9ed;
}
.tray {
    flex: 1;
    display: flex;
    align-items: center;
    padding-left: 230px;
    font-size: 11px;
    position: relative;
}
.tr-pair {
    margin-left: 8px;
}
.tr-pct {
    margin-left: 7px;
    color: #35a035;
}
.tr-up {
    margin-left: 20px;
}
.tr-ico {
    margin-left: 7px;
}
.tr-a {
    margin-left: 7px;
    font-size: 14px;
}
.tr-shield {
    margin-left: 13px;
}
.tr-clock {
    margin-left: 11px;
    display: flex;
    flex-direction: column;
    align-items: center;
    font-size: 10.200px;
    line-height: 14px;
}
.tr-note {
    margin-left: 9px;
}
.note-num {
    font-family: "Open Sans", sans-serif;
    font-size: 9px;
    text-anchor: middle;
    fill: #ddd;
}
```
